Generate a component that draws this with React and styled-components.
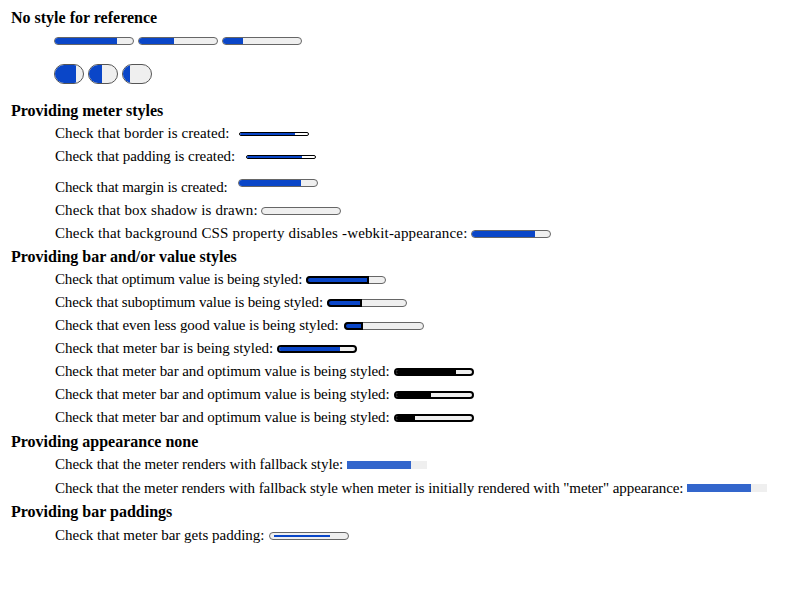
import React from 'react'
import styled, { createGlobalStyle } from 'styled-components'

const GlobalStyle = createGlobalStyle`
  body {
    margin: 0;
    background: #fff;
    color: #000;
    font-family: "Liberation Serif", "Times New Roman", serif;
  }
`

const BLUE = '#0a46c8'

const variants = {
  pill: { w: 80, h: 8, r: 4, border: '1px solid #666', bg: '#efefef', fill: BLUE },
  round: { w: 30, h: 20, r: 10, border: '1px solid #555', bg: '#efefef', fill: BLUE },
  thin: { w: 70, h: 4, r: 2, border: '1px solid #000', bg: '#fff', fill: BLUE },
  optimum: {
    w: 80, h: 8, r: 4, border: '1px solid #666', bg: '#efefef', fill: BLUE,
    fillBorder: '2px solid #000', bleed: true,
  },
  barStyled: { w: 80, h: 8, r: 4, border: '2px solid #000', bg: '#efefef', fill: BLUE },
  barOptimum: { w: 80, h: 8, r: 4, border: '2px solid #000', bg: '#efefef', fill: '#000' },
  flat: { w: 80, h: 8, r: 0, border: 'none', bg: '#efefef', fill: '#3366cc' },
  padded: { w: 80, h: 8, r: 4, border: '1px solid #666', bg: '#efefef', fill: BLUE, pad: '2px 4px' },
}

const Page = styled.div`
  padding: 8px 8px 0 11px;
`

const Heading = styled.div`
  font-weight: bold;
  font-size: 16px;
  line-height: ${p => p.$lh || 23}px;
  height: ${p => p.$lh || 23}px;
  margin-top: ${p => p.$mt || 0}px;
`

const Row = styled.div`
  display: flex;
  align-items: ${p => p.$align || 'center'};
  height: ${p => p.$h || 23}px;
  padding-left: 44px;
  box-sizing: border-box;
  padding-top: ${p => p.$pt || 0}px;
  font-size: 15px;
  letter-spacing: ${p => p.$ls || 0}px;
  white-space: pre;
`

const Label = styled.span`
  line-height: 23px;
  align-self: ${p => p.$self || 'auto'};
`

const Track = styled.div`
  flex: none;
  display: flex;
  box-sizing: border-box;
  width: ${p => p.$v.w}px;
  height: ${p => p.$v.h}px;
  border-radius: ${p => p.$v.r}px;
  border: ${p => p.$v.border};
  background: ${p => p.$v.bg};
  padding: ${p => p.$v.pad || 0};
  overflow: ${p => (p.$v.bleed ? 'visible' : 'hidden')};
  margin-left: ${p => p.$ml ?? 4}px;
  margin-top: ${p => p.$mt || 0}px;
`

const Fill = styled.div`
  box-sizing: border-box;
  height: ${p => (p.$v.bleed ? 'calc(100% + 2px)' : '100%')};
  margin: ${p => (p.$v.bleed ? '-1px 0 0 -1px' : '0')};
  background: ${p => p.$v.fill};
  border: ${p => p.$v.fillBorder || 'none'};
  border-radius: ${p => (p.$v.bleed ? `${p.$v.r}px 0 0 ${p.$v.r}px` : '0')};
`

const Meter = ({ kind = 'pill', value, ml, mt }) => {
  const v = variants[kind]
  return (
    <Track $v={v} $ml={ml} $mt={mt}>
      {value > 0 && <Fill $v={v} style={{ width: `${value * 100}%` }} />}
    </Track>
  )
}

const Line = ({ label, children, ...rest }) => (
  <Row {...rest}>
    <Label>{label}</Label>
    {children}
  </Row>
)

const App = () => {
  return (
    <>
      <GlobalStyle />
      <Page>
        <Heading $lh={20}>No style for reference</Heading>
        <Row $h={25}>
          <Meter value={0.8} ml={-1} />
          <Meter value={0.45} />
          <Meter value={0.25} />
        </Row>
        <Row $h={46} $align="flex-start" $pt={11}>
          <Meter kind="round" value={0.75} ml={-1} />
          <Meter kind="round" value={0.47} />
          <Meter kind="round" value={0.25} />
        </Row>

        <Heading>Providing meter styles</Heading>
        <Line $ls={0.07} label="Check that border is created:">
          <Meter kind="thin" value={0.8} ml={10} />
        </Line>
        <Line $ls={-0.05} label="Check that padding is created:">
          <Meter kind="thin" value={0.8} ml={11} />
        </Line>
        <Row $h={31} $align="flex-start" $ls={-0.1}>
          <Label $self="flex-end">Check that margin is created:</Label>
          <Meter value={0.8} mt={11} ml={10} />
        </Row>
        <Line $ls={0.1} label="Check that box shadow is drawn:">
          <Meter value={0} ml={3} />
        </Line>
        <Line $ls={0.16} label="Check that background CSS property disables -webkit-appearance:">
          <Meter value={0.8} ml={4} />
        </Line>

        <Heading>Providing bar and/or value styles</Heading>
        <Line $ls={-0.15} label="Check that optimum value is being styled:">
          <Meter kind="optimum" value={0.8} />
        </Line>
        <Line $ls={-0.14} label="Check that suboptimum value is being styled:">
          <Meter kind="optimum" value={0.45} />
        </Line>
        <Line $ls={-0.08} label="Check that even less good value is being styled:">
          <Meter kind="optimum" value={0.25} ml={5} />
        </Line>
        <Line $ls={-0.05} label="Check that meter bar is being styled:">
          <Meter kind="barStyled" value={0.8} />
        </Line>
        <Line $ls={-0.09} label="Check that meter bar and optimum value is being styled:">
          <Meter kind="barOptimum" value={0.8} />
        </Line>
        <Line $ls={-0.09} label="Check that meter bar and optimum value is being styled:">
          <Meter kind="barOptimum" value={0.46} />
        </Line>
        <Line $ls={-0.09} label="Check that meter bar and optimum value is being styled:">
          <Meter kind="barOptimum" value={0.25} />
        </Line>

        <Heading $mt={1}>Providing appearance none</Heading>
        <Line $ls={-0.06} label="Check that the meter renders with fallback style:">
          <Meter kind="flat" value={0.8} />
        </Line>
        <Line
          $h={24}
          $ls={-0.085}
          label='Check that the meter renders with fallback style when meter is initially rendered with "meter" appearance:'
        >
          <Meter kind="flat" value={0.8} />
        </Line>

        <Heading>Providing bar paddings</Heading>
        <Line $h={25} label="Check that meter bar gets padding:">
          <Meter kind="padded" value={0.8} />
        </Line>
      </Page>
    </>
  )
}

export default App
